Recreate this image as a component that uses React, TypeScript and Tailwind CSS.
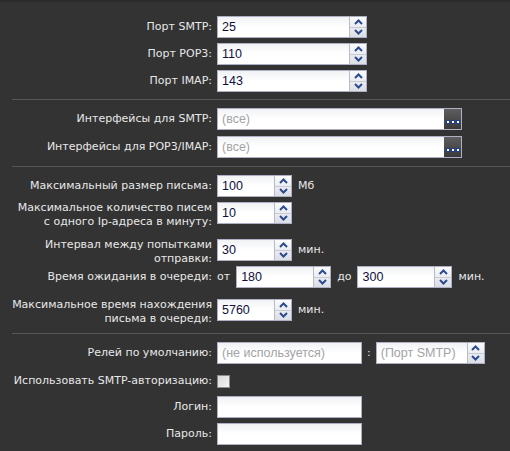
import React from "react";

const FONT = { fontFamily: '"DejaVu Sans", Verdana, sans-serif' };
const INPUT_FONT = { fontFamily: '"Liberation Sans", Arial, sans-serif' };

function ChevUp() {
  return (
    <svg width="9" height="6" viewBox="0 0 9 6">
      <path d="M1 5 L4.5 1.5 L8 5" fill="none" stroke="#2b4b8e" strokeWidth="2" />
    </svg>
  );
}
function ChevDown() {
  return (
    <svg width="9" height="6" viewBox="0 0 9 6">
      <path d="M1 1 L4.5 4.5 L8 1" fill="none" stroke="#2b4b8e" strokeWidth="2" />
    </svg>
  );
}

function Spin() {
  return (
    <div className="flex w-[17px] shrink-0 flex-col border-l border-[#b7bacb] bg-gradient-to-b from-[#fbfbfc] to-[#dcdee6]">
      <div className="flex flex-1 items-center justify-center border-b border-[#c8cad6]">
        <ChevUp />
      </div>
      <div className="flex flex-1 items-center justify-center">
        <ChevDown />
      </div>
    </div>
  );
}

function Box({
  w,
  value,
  placeholder,
  spin,
  dots,
}: {
  w: string;
  value?: string;
  placeholder?: string;
  spin?: boolean;
  dots?: boolean;
}) {
  return (
    <div
      className={`flex h-[22px] shrink-0 border border-[#adb0c2] bg-gradient-to-b from-[#f1f2f4] via-white to-white ${w}`}
    >
      <div
        className="flex flex-1 items-center overflow-hidden whitespace-nowrap pl-[4px] text-[12.5px]"
        style={INPUT_FONT}
      >
        {value ? (
          <span className="text-[#10103a]">{value}</span>
        ) : placeholder ? (
          <span className="text-[#a3a3a3]">{placeholder}</span>
        ) : null}
      </div>
      {spin && <Spin />}
      {dots && (
        <div className="flex w-[17px] shrink-0 items-end justify-center bg-gradient-to-b from-[#5e5e5e] to-[#3a3a3a] pb-[5px]">
          <div className="flex gap-[1px]">
            <div className="h-[4px] w-[4px] border border-[#1e3d8a] bg-white" />
            <div className="h-[4px] w-[4px] border border-[#1e3d8a] bg-white" />
            <div className="h-[4px] w-[4px] border border-[#1e3d8a] bg-white" />
          </div>
        </div>
      )}
    </div>
  );
}

function Row({
  label,
  children,
  className = "",
  two,
}: {
  label: React.ReactNode;
  children: React.ReactNode;
  className?: string;
  two?: boolean;
}) {
  return (
    <div className={`flex gap-[5px] ${two ? "items-start" : "items-center"} ${className}`}>
      <div
        className={`w-[212px] shrink-0 whitespace-nowrap text-right text-[11px] text-[#e8e8e8] ${
          two ? "mt-[-1px] leading-[14px]" : "leading-[22px]"
        }`}
      >
        {label}
      </div>
      <div className="flex items-center gap-[6px] text-[11px] text-[#e8e8e8]">{children}</div>
    </div>
  );
}

function Sep({ className = "" }: { className?: string }) {
  return <div className={`ml-[12px] h-[1px] bg-[#575757] ${className}`} />;
}

export default function App() {
  return (
    <div
      className="h-[451px] w-[510px] overflow-hidden border-t-2 border-[#2a2a2a] bg-[#333333] pt-[14px]"
      style={FONT}
    >
      <Row label="Порт SMTP:">
        <Box w="w-[150px]" value="25" spin />
      </Row>
      <Row label="Порт POP3:" className="mt-[5px]">
        <Box w="w-[150px]" value="110" spin />
      </Row>
      <Row label="Порт IMAP:" className="mt-[5px]">
        <Box w="w-[150px]" value="143" spin />
      </Row>

      <Sep className="mt-[7px]" />

      <Row label="Интерфейсы для SMTP:" className="mt-[8px]">
        <Box w="w-[245px]" placeholder="(все)" dots />
      </Row>
      <Row label="Интерфейсы для POP3/IMAP:" className="mt-[6px]">
        <Box w="w-[245px]" placeholder="(все)" dots />
      </Row>

      <Sep className="mt-[8px]" />

      <Row label="Максимальный размер письма:" className="mt-[8px]">
        <Box w="w-[75px]" value="100" spin />
        <span>Мб</span>
      </Row>
      <Row
        two
        className="mt-[5px] h-[28px]"
        label={
          <>
            Максимальное количество писем
            <br />с одного Ip-адреса в минуту:
          </>
        }
      >
        <Box w="w-[75px]" value="10" spin />
      </Row>
      <Row
        two
        className="mt-[9px] h-[27px]"
        label={
          <>
            Интервал между попытками
            <br />
            отправки:
          </>
        }
      >
        <Box w="w-[75px]" value="30" spin />
        <span>мин.</span>
      </Row>
      <Row label="Время ожидания в очереди:" className="mt-[0px]">
        <span>от</span>
        <Box w="w-[95px]" value="180" spin />
        <span>до</span>
        <Box w="w-[95px]" value="300" spin />
        <span>мин.</span>
      </Row>
      <Row
        two
        className="mt-[11px] h-[28px]"
        label={
          <>
            Максимальное время нахождения
            <br />
            письма в очереди:
          </>
        }
      >
        <Box w="w-[75px]" value="5760" spin />
        <span>мин.</span>
      </Row>

      <Sep className="mt-[6px]" />

      <Row label="Релей по умолчанию:" className="mt-[8px]">
        <Box w="w-[145px]" placeholder="(не используется)" />
        <span className="-mx-[1px]">:</span>
        <Box w="w-[109px]" placeholder="(Порт SMTP)" spin />
      </Row>
      <Row label="Использовать SMTP-авторизацию:" className="mt-[6px]">
        <div className="h-[13px] w-[13px] border border-[#8c8c8c] bg-gradient-to-br from-[#d8d8d8] to-[#f4f4f4]" />
      </Row>
      <Row label="Логин:" className="mt-[4px]">
        <Box w="w-[145px]" />
      </Row>
      <Row label="Пароль:" className="mt-[5px]">
        <Box w="w-[145px]" />
      </Row>
    </div>
  );
}
